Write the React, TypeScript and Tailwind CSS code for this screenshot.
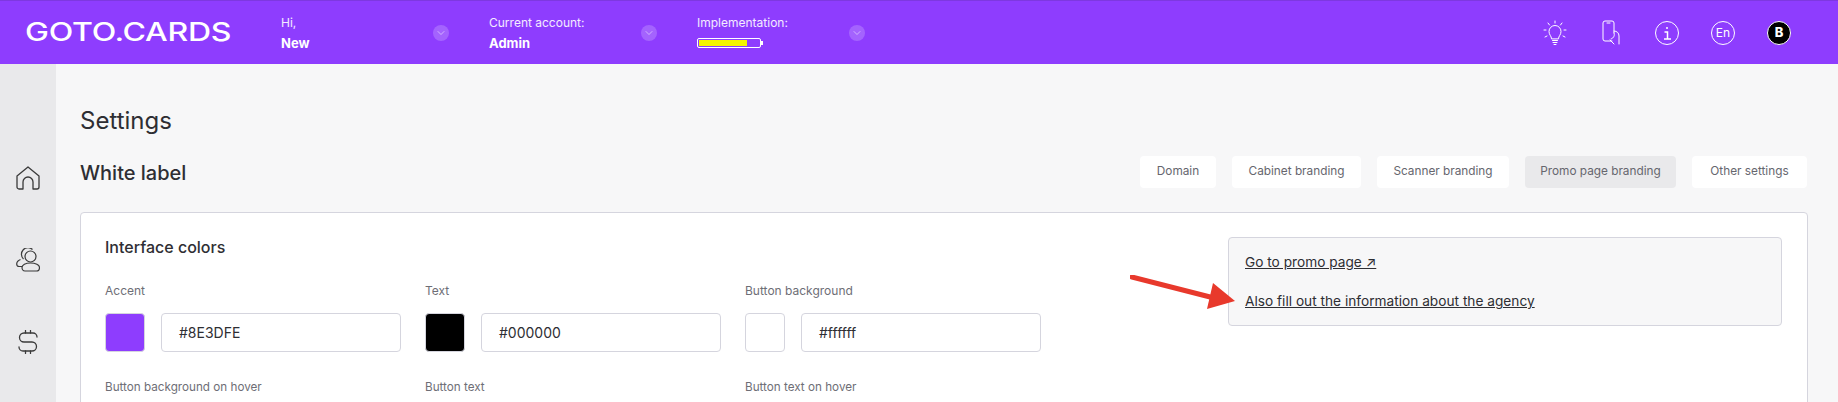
import { ChevronDown } from "lucide-react";

const font = { fontFamily: "Inter, 'Noto Sans', sans-serif" };

const tabs = [
  { name: "Domain", width: "w-[76px]" },
  { name: "Cabinet branding", width: "w-[129px]" },
  { name: "Scanner branding", width: "w-[132px]" },
  { name: "Promo page branding", width: "w-[151px]", active: true },
  { name: "Other settings", width: "w-[115px]" },
];

const colorFields = [
  { label: "Accent", swatch: "bg-[#8E3DFE]", value: "#8E3DFE" },
  { label: "Text", swatch: "bg-black", value: "#000000" },
  { label: "Button background", swatch: "bg-white", value: "#ffffff" },
];

const HeaderChevron = () => (
  <div className="flex h-4 w-4 items-center justify-center rounded-full bg-white/20 text-white">
    <ChevronDown size={12} strokeWidth={1} />
  </div>
);

const BulbIcon = () => (
  <svg width="24" height="26" viewBox="0 0 24 26" fill="none" stroke="white" strokeWidth="1" strokeLinecap="round">
    <path d="M8.500 18.500c0-2.500-2.500-3.600-2.500-7a6 6 0 0 1 12 0c0 3.400-2.500 4.500-2.500 7z" />
    <path d="M9.500 20.500h5M10 22.500h4M11 24.500h2" />
    <path d="M12 1v2M5 3l1.500 2M19 3l-1.500 2M1 10h2M21 10h2M2 17l2-1M22 17l-2-1" />
  </svg>
);

const PhoneIcon = () => (
  <svg width="20" height="25" viewBox="0 0 20 25" fill="none" stroke="white" strokeWidth="1" strokeLinecap="round">
    <path d="M11 21H4a2 2 0 0 1-2-2V3a2 2 0 0 1 2-2h7a2 2 0 0 1 2 2v10" />
    <path d="M6 3h3" />
    <path d="M13 11c3 0 5 2 5 5v8M9 20l4 4M13 13c1 2 0 5-3 6" />
  </svg>
);

const InfoIcon = () => (
  <svg width="24" height="24" viewBox="0 0 24 24" fill="none" stroke="white" strokeWidth="1">
    <circle cx="12" cy="12" r="11.500" />
    <path d="M12 6v2M9.500 11H12.500V18M9 18h7" strokeWidth="1.500" />
  </svg>
);

const HomeIcon = () => (
  <svg width="24" height="24" viewBox="0 0 24 24" fill="none" stroke="#3a3a3a" strokeWidth="1.300" strokeLinejoin="round">
    <path d="M1 10L12 1l11 9v11a2 2 0 0 1-2 2h-4v-7a5 5 0 0 0-10 0v7H3a2 2 0 0 1-2-2z" />
  </svg>
);

const UsersIcon = () => (
  <svg width="24" height="24" viewBox="0 0 24 24" fill="none" stroke="#3a3a3a" strokeWidth="1.200">
    <circle cx="14.500" cy="8.500" r="5.500" />
    <path d="M7.500 11a5.500 5.500 0 0 1 9-9.500" />
    <path d="M4.500 11.500C2 12.500.700 14 .700 16c0 1.500 1 2.500 2.500 2.500H6" />
    <path d="M6 19.500c0-2.500 3.500-4.500 8.500-4.500s9 2 9 4.500c0 2-1 3.500-3 3.500H9c-2 0-3-1.500-3-3.500z" />
  </svg>
);

const DollarIcon = () => (
  <svg width="24" height="24" viewBox="0 0 24 24" fill="none" stroke="#3a3a3a" strokeWidth="1.300" strokeLinecap="round">
    <path d="M21 7a4 4 0 0 0-4-4H8a4.500 4.500 0 0 0 0 9h8a4.500 4.500 0 0 1 0 9H7a4 4 0 0 1-4-4" />
    <path d="M9.500 3V.500M14.500 3V.500M9.500 23.500V21M14.500 23.500V21" />
  </svg>
);

const RedArrow = () => (
  <svg className="absolute left-[1130px] top-[275px]" width="108" height="36" viewBox="0 0 108 36" fill="none">
    <path d="M2 2L88 24" stroke="#e8392c" strokeWidth="5" strokeLinecap="round" />
    <path d="M83 8L105 26L77 34z" fill="#e8392c" />
  </svg>
);

const App = () => {
  return (
    <div className="relative h-[402px] w-full overflow-hidden bg-[#f7f7f8] text-[#2e2e33]" style={font}>
      <header className="flex h-16 items-center border-t border-[#7e38e0] bg-[#8E3DFE] text-white">
        <div className="w-[281px] pl-[25px]">
          <div className="origin-left scale-x-[1.28] text-[25px] leading-none font-medium tracking-[-0.2px]">GOTO.CARDS</div>
        </div>
        <div className="flex w-[208px] items-center">
          <div className="w-[152px]">
            <div className="text-xs leading-5 text-white/90">Hi,</div>
            <div className="text-[13px] leading-5 font-bold">New</div>
          </div>
          <HeaderChevron />
        </div>
        <div className="flex w-[208px] items-center">
          <div className="w-[152px]">
            <div className="text-xs leading-5 text-white/90">Current account:</div>
            <div className="text-[13px] leading-5 font-bold">Admin</div>
          </div>
          <HeaderChevron />
        </div>
        <div className="flex w-[208px] items-center">
          <div className="w-[152px]">
            <div className="text-xs leading-5 text-white/90">Implementation:</div>
            <div className="flex h-5 items-center">
              <div className="h-[10px] w-[64px] rounded-[2px] border border-white p-px">
                <div className="h-full w-[48px] bg-[#f5f500]" />
              </div>
              <div className="h-1 w-0.5 bg-white" />
            </div>
          </div>
          <HeaderChevron />
        </div>
        <div className="ml-auto flex items-center pr-[31px]">
          <div className="flex w-[56px] justify-center"><BulbIcon /></div>
          <div className="flex w-[56px] justify-center"><PhoneIcon /></div>
          <div className="flex w-[56px] justify-center"><InfoIcon /></div>
          <div className="flex w-[56px] justify-center">
            <div className="flex h-6 w-6 items-center justify-center rounded-full border border-white text-xs">En</div>
          </div>
          <div className="flex w-[56px] justify-center">
            <div className="flex h-6 w-6 items-center justify-center rounded-full border border-white bg-black text-[13px] font-extrabold">B</div>
          </div>
        </div>
      </header>

      <div className="flex">
        <aside className="flex h-[338px] w-14 shrink-0 flex-col items-center gap-[58px] bg-[#e9e9eb] pt-[102px]">
          <HomeIcon />
          <UsersIcon />
          <DollarIcon />
        </aside>

        <main className="flex-1 pt-[41px] pr-[30px] pl-6">
          <h1 className="text-2xl leading-8">Settings</h1>

          <div className="mt-[19px] flex items-center justify-between">
            <h2 className="pt-0.5 text-xl font-medium">White label</h2>
            <div className="flex gap-4 pr-px">
              {tabs.map((tab) => (
                <div
                  key={tab.name}
                  className={`flex h-8 items-center justify-center rounded text-[11.800px] text-[#66666e] ${tab.width} ${tab.active ? "bg-[#e9e9eb]" : "bg-white"}`}
                >
                  {tab.name}
                </div>
              ))}
            </div>
          </div>

          <section className="mt-6 flex items-start justify-between rounded border border-[#d5d5de] bg-white pt-6 pr-[25px] pb-10 pl-6">
            <div>
              <h3 className="-mt-px text-base leading-[22px] font-medium">Interface colors</h3>
              <div className="mt-[22px] grid grid-cols-[296px_296px_296px] gap-x-6 gap-y-[25px]">
                {colorFields.map((field) => (
                  <div key={field.label}>
                    <div className="pt-px text-xs leading-5 text-[#6e6e76]">{field.label}</div>
                    <div className="mt-3 flex gap-4">
                      <div className={`h-[39px] w-10 rounded border border-[#d5d5de] ${field.swatch}`} />
                      <div className="flex h-[39px] w-60 items-center rounded border border-[#d5d5de] bg-white pl-[17px] text-sm">
                        {field.value}
                      </div>
                    </div>
                  </div>
                ))}
                <div className="text-[11.700px] leading-5 text-[#6e6e76]">Button background on hover</div>
                <div className="text-[11.700px] leading-5 text-[#6e6e76]">Button text</div>
                <div className="text-[11.700px] leading-5 text-[#6e6e76]">Button text on hover</div>
              </div>
            </div>

            <div className="flex h-[89px] w-[554px] flex-col justify-between rounded border border-[#d5d5de] bg-[#f7f7f8] px-4 pt-[14px] pb-[14px] text-[13.700px] leading-5">
              <a className="underline">Go to promo page ↗</a>
              <a className="underline">Also fill out the information about the agency</a>
            </div>
          </section>
        </main>
      </div>

      <RedArrow />
    </div>
  );
};

export default App;
